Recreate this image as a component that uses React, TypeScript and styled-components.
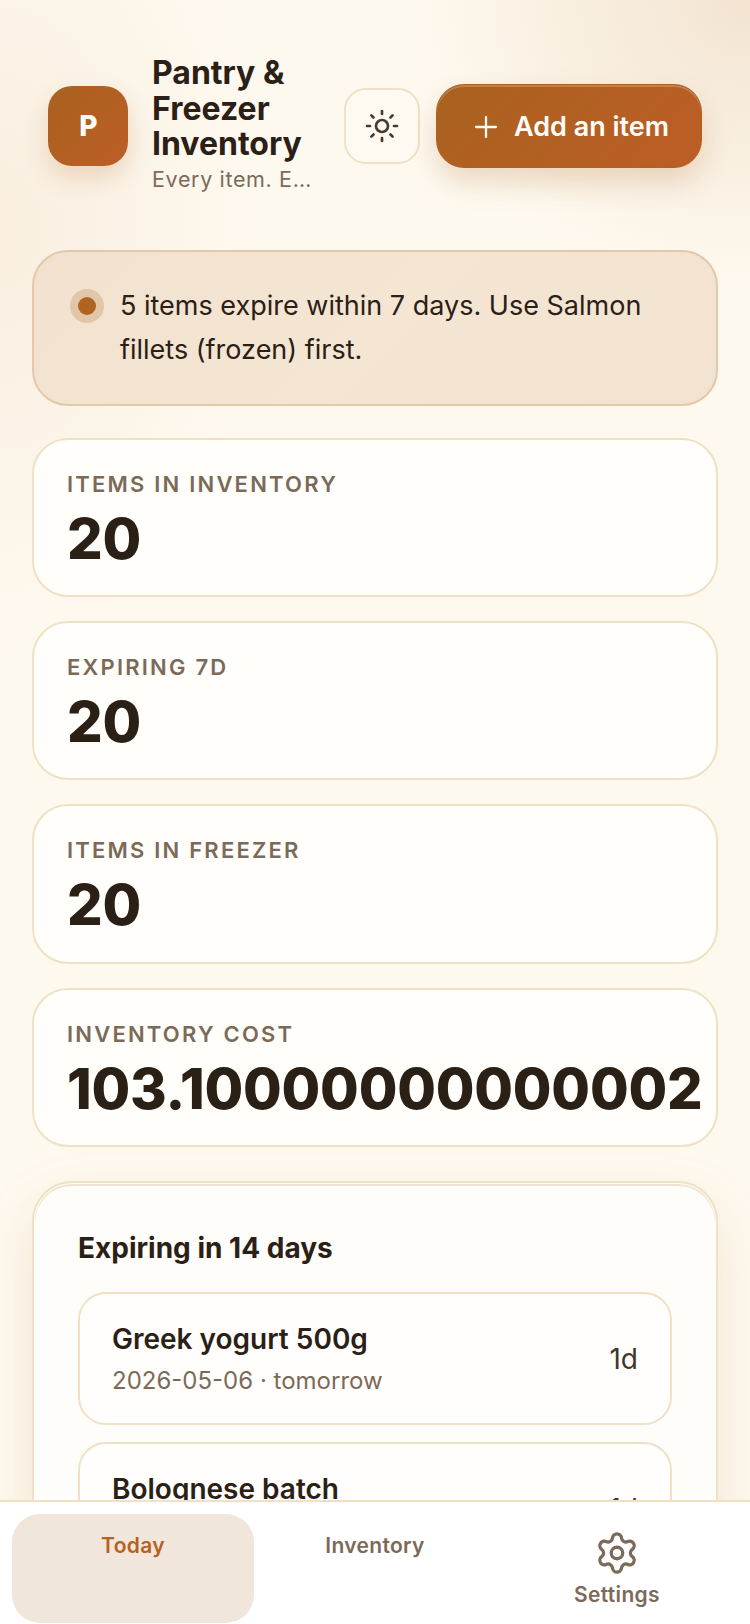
import React from "react";
import styled, { createGlobalStyle } from "styled-components";
import { Plus, Settings, Sun } from "lucide-react";

const Global = createGlobalStyle`
  * { box-sizing: border-box; }
  html, body { margin: 0; height: 100%; }
  body {
    font-family: Inter, "Noto Sans", sans-serif;
    color: #2b2016;
    background: #fef9ef;
    overflow: hidden;
  }
`;

const Shell = styled.div`
  height: 1624px;
  overflow: hidden;
  background:
    radial-gradient(340px 290px at 100% 0%, #f3e4d1 0%, rgba(243, 228, 209, 0) 100%),
    radial-gradient(260px 420px at 0% 14%, #f9eee0 0%, rgba(249, 238, 224, 0) 100%),
    #fef9ef;
`;

const Header = styled.header`
  display: flex;
  align-items: center;
  gap: 16px;
  padding: 55px 48px 53px;
`;

const Brand = styled.div`
  flex: 1;
  min-width: 0;
  display: flex;
  align-items: center;
  gap: 24px;
`;

const Logo = styled.div`
  flex: none;
  width: 80px;
  height: 80px;
  padding: 1px 0 0 1px;
  border-radius: 24px;
  background: linear-gradient(135deg, #a9621f, #bd5d27);
  box-shadow: 0 12px 24px rgba(169, 98, 31, 0.2);
  color: #fffdf8;
  font-size: 28px;
  font-weight: 800;
  display: flex;
  align-items: center;
  justify-content: center;
`;

const BrandText = styled.div`
  min-width: 0;
  padding-bottom: 4px;
`;

const Title = styled.h1`
  margin: 0;
  font-size: 32px;
  line-height: 35.5px;
  font-weight: 700;
`;

const Tagline = styled.p`
  margin: 3px 0 0;
  padding-right: 5px;
  font-size: 21.5px;
  line-height: 28px;
  letter-spacing: 0.65px;
  color: #7c6a58;
  white-space: nowrap;
  overflow: hidden;
  text-overflow: ellipsis;
`;

const ThemeButton = styled.button`
  flex: none;
  width: 76px;
  height: 76px;
  padding: 0;
  border-radius: 22px;
  border: 2px solid #f0e0c4;
  background: #fffaf1;
  color: #4a3a2c;
  display: flex;
  align-items: center;
  justify-content: center;
`;

const AddButton = styled.button`
  flex: none;
  width: 266px;
  height: 84px;
  padding: 2px 0 0;
  border: 1px solid #ae6220;
  border-radius: 28px;
  background: linear-gradient(135deg, #a9621f, #bd5d27);
  background-origin: border-box;
  box-shadow: inset 0 2px 0 rgba(255, 255, 255, 0.2), 0 14px 28px rgba(169, 98, 31, 0.22);
  color: #fffdf8;
  font-family: inherit;
  font-size: 27px;
  font-weight: 600;
  display: flex;
  align-items: center;
  justify-content: center;
  gap: 11px;
`;

const Main = styled.main`
  display: flex;
  flex-direction: column;
  gap: 24px;
  padding: 0 32px;
`;

const Alert = styled.div`
  display: flex;
  align-items: flex-start;
  gap: 16px;
  padding: 32px 36px 31px;
  margin-bottom: 8px;
  border-radius: 36px;
  border: 2px solid #e4c8a8;
  background: linear-gradient(135deg, #f1e1ce, #f5e6d4 50%, #f2e3d1);
  font-size: 27px;
  line-height: 44.5px;
`;

const Dot = styled.span`
  flex: none;
  width: 18px;
  height: 18px;
  margin: 13px 8px 0 8px;
  border-radius: 50%;
  background: #b0641f;
  box-shadow: 0 0 0 8px #e2c6a8;
`;

const StatCard = styled.section`
  height: 159.4px;
  padding: 30px 33px;
  border-radius: 36px;
  border: 2px solid #f0e0c4;
  background: #fffefb;
`;

const StatLabel = styled.div`
  font-size: 22px;
  line-height: 28px;
  font-weight: 600;
  letter-spacing: 2.2px;
  color: #7c6a58;
`;

const StatValue = styled.div`
  margin-top: 9px;
  font-size: 56px;
  line-height: 64px;
  font-weight: 800;
  letter-spacing: -0.2px;
  white-space: nowrap;
`;

const Panel = styled.section`
  margin-top: 10px;
  padding: 47px 44px 32px;
  border-radius: 40px;
  border: 2px solid #f0e0c4;
  background: #fffdf9;
  box-shadow: inset 0 0 0 1px #fffefb, inset 0 2px 0 1px #f0e4d0, 0 24px 60px rgba(169, 98, 31, 0.13);
`;

const PanelTitle = styled.h2`
  margin: 0 0 26px;
  font-size: 28px;
  line-height: 36px;
  font-weight: 700;
`;

const ItemList = styled.div`
  display: flex;
  flex-direction: column;
  gap: 17px;
`;

const Item = styled.article`
  display: flex;
  align-items: center;
  justify-content: space-between;
  height: 133px;
  padding: 0 32px;
  border-radius: 28px;
  border: 2px solid #f0e0c4;
  background: #fffefc;
`;

const ItemName = styled.div`
  font-size: 28px;
  line-height: 38px;
  font-weight: 600;
`;

const ItemMeta = styled.div`
  margin-top: 7px;
  font-size: 24px;
  line-height: 32px;
  color: #7c6a58;
`;

const ItemDays = styled.div`
  font-size: 28px;
  color: #43362a;
`;

const Nav = styled.nav`
  position: fixed;
  left: 0;
  right: 0;
  bottom: 0;
  height: 124px;
  padding: 12px 12px 0;
  display: grid;
  grid-template-columns: repeat(3, 1fr);
  align-items: stretch;
  background: #ffffff;
  border-top: 2px solid #f0e0c4;
`;

const NavItem = styled.div<{ $active?: boolean }>`
  display: flex;
  flex-direction: column;
  align-items: center;
  padding-top: 17px;
  margin-bottom: 1px;
  border-radius: 28px;
  background: ${(p) => (p.$active ? "#f1e6dc" : "transparent")};
  color: ${(p) => (p.$active ? "#b5621f" : "#7c6a58")};
  font-size: 21px;
  line-height: 30px;
  font-weight: 600;
  letter-spacing: 0.32px;
`;

const NavIcon = styled(Settings)`
  margin-top: -1px;
  margin-bottom: 4px;
`;

const items = [
  { name: "Greek yogurt 500g", meta: "2026-05-06 · tomorrow", days: "1d" },
  { name: "Bolognese batch", meta: "2026-05-06 · tomorrow", days: "1d" },
];

const stats = [
  { label: "ITEMS IN INVENTORY", value: "20" },
  { label: "EXPIRING 7D", value: "20" },
  { label: "ITEMS IN FREEZER", value: "20" },
  { label: "INVENTORY COST", value: "103.10000000000002" },
];

export default function App() {
  return (
    <Shell>
      <Global />
      <Header>
        <Brand>
          <Logo>P</Logo>
          <BrandText>
            <Title>Pantry &amp; Freezer Inventory</Title>
            <Tagline>Every item. Every shelf.</Tagline>
          </BrandText>
        </Brand>
        <ThemeButton aria-label="Toggle theme">
          <Sun size={36} strokeWidth={1.8} />
        </ThemeButton>
        <AddButton>
          <Plus size={34} strokeWidth={1.6} />
          Add an item
        </AddButton>
      </Header>
      <Main>
        <Alert>
          <Dot />
          <span>5 items expire within 7 days. Use Salmon fillets (frozen) first.</span>
        </Alert>
        {stats.map((s) => (
          <StatCard key={s.label}>
            <StatLabel>{s.label}</StatLabel>
            <StatValue>{s.value}</StatValue>
          </StatCard>
        ))}
        <Panel>
          <PanelTitle>Expiring in 14 days</PanelTitle>
          <ItemList>
            {items.map((i) => (
              <Item key={i.name}>
                <div>
                  <ItemName>{i.name}</ItemName>
                  <ItemMeta>{i.meta}</ItemMeta>
                </div>
                <ItemDays>{i.days}</ItemDays>
              </Item>
            ))}
          </ItemList>
        </Panel>
      </Main>
      <Nav>
        <NavItem $active>Today</NavItem>
        <NavItem>Inventory</NavItem>
        <NavItem>
          <NavIcon size={46} strokeWidth={1.7} />
          Settings
        </NavItem>
      </Nav>
    </Shell>
  );
}
